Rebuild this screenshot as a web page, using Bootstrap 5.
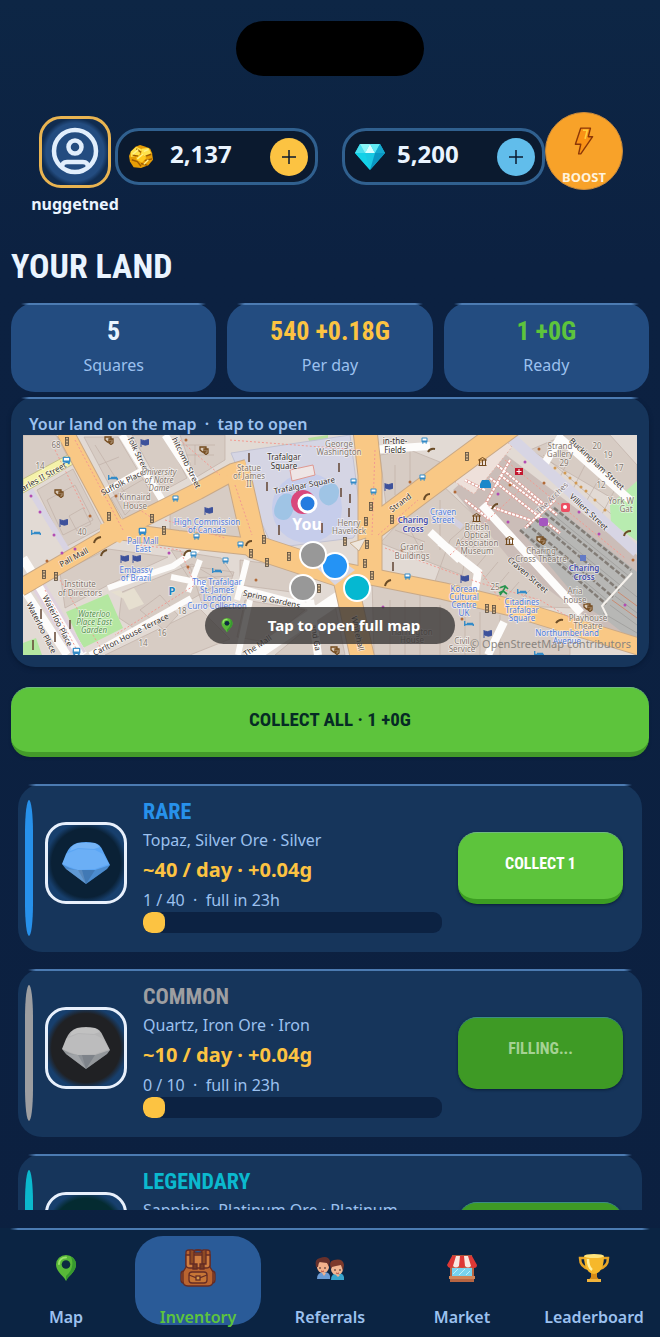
<!DOCTYPE html>
<html lang="en">
<head>
<meta charset="utf-8">
<meta name="viewport" content="width=device-width, initial-scale=1">
<title>Your Land</title>
<link href="https://cdn.jsdelivr.net/npm/bootstrap@5.3.0/dist/css/bootstrap.min.css" rel="stylesheet">
<style>
  :root { --ice:#eaf4ff; --soft:#9cc1ef; --gold:#fcc342; --green:#5dc43c; --panel:#16355b; --tile:#234c80; --edge:#4c7bb2; }
  body { font-family:"Noto Sans",sans-serif; color:var(--ice); background:linear-gradient(#0d2645,#0c2141 20%,#0c2040); }
  .app { height:100vh; overflow:hidden; }
  .display-face { font-family:"Liberation Sans Narrow","Roboto Condensed",sans-serif; font-weight:700; }
  .island { width:188px; height:55px; margin-top:21px; border-radius:28px; background:#000; }
  .topbar { margin-top:36px; padding:0 37px 0 39px; }
  .profile { width:72px; margin-top:4px; }
  .avatar { width:72px; height:72px; border:3px solid #e9b451; border-radius:22px; background:radial-gradient(circle,#234c80 62%,#102c50 72%); }
  .player { font-size:16px; line-height:24px; margin-top:4px; }
  .wallet { height:57px; margin-top:16px; border:3px solid #30608f; border-radius:24px; background:#0b1a2f; padding:0 7px 0 10px; }
  .wallet output { font-size:24px; line-height:28px; padding-bottom:5px; }
  .plus { width:38px; height:38px; border-radius:50%; color:#0b1a2f; }
  .boost { width:78px; height:78px; border-radius:50%; background:#f8a229; border:1px solid #c98a3c; color:#fff3dc; font-size:13px; line-height:16px; padding:14px 0 4px; }
  .content { padding:0 11px; }
  .page-title { font-size:34px; line-height:40px; margin:30px 0 17px; }
  .stats { gap:11px; }
  .lit { position:relative; }
  .lit::before { content:""; position:absolute; top:0; left:10px; right:10px; height:2px; background:linear-gradient(90deg,transparent,var(--edge) 8px,var(--edge) calc(100% - 8px),transparent); }
  .stat { height:89px; border-radius:24px; background:var(--tile); padding-top:12px; }
  .stat dt { font-size:16px; line-height:24px; font-weight:400; color:var(--soft); margin-top:6px; }
  .stat dd { font-size:26px; line-height:32px; margin:0; }
  .gold { color:var(--gold); } .leaf { color:var(--green); } .soft { color:var(--soft); }
  .map-card { border-radius:24px; background:var(--panel); margin-top:5px; padding:16px 12px 12px; box-shadow:0 2px 4px #081a35; }
  .map-card h2 { font-size:16px; line-height:22px; margin:0 0 0 6px; font-weight:600; }
  .map-link { position:relative; height:220px; }
  .map-link svg.chart { width:100%; height:220px; }
  .map-hint { position:absolute; left:0; right:0; bottom:11px; margin:auto; width:250px; height:37px; border-radius:19px; background:rgba(55,53,53,.78); color:#fff; font-size:15px; }
  .credit { position:absolute; right:6px; bottom:3px; font-size:11px; line-height:16px; color:#8a8580; }
  .btn-dig { border:0; border-bottom:5px solid #3c9d22; border-top:1px solid #70ba80; border-radius:19px; background:var(--green); color:#fff; box-shadow:0 1px 3px #0a1e38; }
  .btn-dig:disabled { background:#3e9a25; border-bottom-color:#3e9a25; border-top-color:#3b8d85; color:#a5d293; opacity:1; }
  .btn-all { height:70px; margin-top:20px; font-size:19px; color:#062b25; border-bottom-color:#439b2a; }
  .deposits { gap:17px; padding:27px 7px 0; }
  .deposit { height:168px; flex:none; border-radius:24px; background:var(--panel); padding:16px 19px 16px 7px; }
  .rail { width:8px; margin-right:12px; border-radius:4px/32px; background:var(--tone); }
  .gem-box { width:82px; height:82px; margin-bottom:10px; border:3px solid #e8f0fc; border-radius:21px; background:radial-gradient(circle,var(--pit) 64%,#173f6d 76%); }
  .deposit h3 { font-size:22px; line-height:24px; margin:0; color:var(--tone); }
  .ores { font-size:16px; line-height:32px; }
  .rate { font-size:20px; line-height:28px; }
  .rate, .ores, .fill-note { white-space:nowrap; }
  .fill-note { font-size:16px; line-height:24px; padding-top:4px; }
  .meter { height:21px; border-radius:9px; background:#0c2242; --bs-progress-bar-bg:#fcc342; }
  .meter .progress-bar { min-width:22px; border-radius:8px; }
  .deposit .btn-dig { width:165px; height:72px; font-size:16px; padding-bottom:10px; }
  .tone-rare { --tone:#2791eb; --pit:#0a2136; }
  .tone-common { --tone:#9d9ea1; --pit:#202124; }
  .tone-legend { --tone:#0bb9ce; --pit:#042b31; }
  .tabs { margin-top:18px; padding:8px 0 12px; background:#0b2443; }
  .tab-item { flex:1 1 0; height:89px; margin:0 3px; padding-top:12px; border-radius:28px; font-size:16px; line-height:24px; }
  .tab-item span { margin-bottom:-4px; }
  .tab-item.current { background:#2a5b98; color:var(--green); }
  /* street map */
  .st { fill:none; stroke:#fdfcfb; stroke-width:7; }
  .mn { fill:none; stroke:#f9c885; stroke-linejoin:round; }
  .mc { fill:none; stroke:#c9a987; stroke-linejoin:round; }
  .path { fill:none; stroke:#f29a91; stroke-width:1; stroke-dasharray:2 2; }
  .lot { fill:#d7ccc4; stroke:#c0b0a7; stroke-width:.7; }
  .tx { font-family:"Noto Sans",sans-serif; text-anchor:middle; paint-order:stroke; stroke:#fff; stroke-opacity:.6; stroke-width:1.5px; }
  .t8 { font-size:8px; }
</style>
</head>
<body>
<svg class="d-none" xmlns="http://www.w3.org/2000/svg">
  <symbol id="pin" viewBox="0 0 20 27"><path d="M10 26C8 21 0 17 0 9.500A10 9.500 0 0 1 20 9.500C20 17 12 21 10 26Z" fill="#58b838"/><path d="M10 26C12 21 20 17 20 9.500A10 9.500 0 0 0 15 1.500C18 9 16 16 10 21Z" fill="#37992f"/><path d="M3 9c0-4 3-6.500 7-6.500" fill="none" stroke="#9be16c" stroke-width="2" stroke-linecap="round"/><circle cx="10" cy="9.500" r="4.300" fill="#0d2941"/></symbol>
  <symbol id="gem" viewBox="0 0 48 42"><path d="M4 12Q8 3 15 1q9-2 18 0 5 1 8 8l7 14-3 4-21 15L4 27 0 22Z" fill="currentColor"/><path d="M10 4 16 1h17l5 4-6 2-16-1-8 3Z" fill="#fff" opacity=".16"/><path d="M4 12 16 7l17 1 8 4 6 10-14 5-17 1-16-6Z" fill="#fff" opacity=".1"/><path d="M0 22q8 5 16 6h17l15-5-3 4-21 15L4 27Z" fill="#123" opacity=".2"/><path d="M16 28h17l-9 14Z" fill="#123" opacity=".16"/><path d="m16 28 4 0 4 14L4 27Z" fill="#fff" opacity=".12"/></symbol>
  <symbol id="lights" viewBox="0 0 4 9"><rect x=".5" y=".5" width="3" height="8" fill="#d7b78d" stroke="#554a3d" stroke-width=".8"/><path d="M1 3h2M1 6h2" stroke="#554a3d" stroke-width="1"/></symbol>
  <symbol id="flag" viewBox="0 0 9 8"><path d="M1 0v8M1.500 1Q4 2.500 8.500.5v5Q5 7 1.500 5Z" fill="#3d519b" stroke="#3d519b"/></symbol>
  <symbol id="mask" viewBox="0 0 10 9"><path d="M1 1h6v5H3.500L1 4ZM5 3h4v4L7 8.500 5 7Z" fill="#d9c9b7" stroke="#734a1d" stroke-width="1.300"/></symbol>
  <symbol id="bus" viewBox="0 0 7 7"><rect x=".5" y=".5" width="6" height="5" rx="1" fill="#338bc8"/><path d="M1.500 1.500h4v2h-4z" fill="#fff"/><path d="M1 6h1.500M4.500 6H6" stroke="#338bc8"/></symbol>
  <symbol id="bed" viewBox="0 0 10 5"><path d="M.7 0v5M1 3.500h8.300V5M3 2.500h6" fill="none" stroke="#338bc8" stroke-width="1.300"/></symbol>
  <symbol id="museum" viewBox="0 0 9 9"><path d="M.5 3 4.500.5 8.500 3ZM1.500 3v5M4.500 3v5M7.500 3v5M.5 8.500h8" fill="none" stroke="#734a1d"/></symbol>
</svg>

<div class="app d-flex flex-column">
  <div class="island flex-shrink-0 mx-auto"></div>

  <header class="topbar d-flex align-items-start flex-shrink-0">
    <div class="profile d-flex flex-column align-items-center flex-shrink-0 me-1">
      <div class="avatar d-flex justify-content-center">
        <svg width="48" height="48" viewBox="0 0 48 48" class="mt-2" fill="none" stroke="#e1eefc" stroke-width="4.500"><circle cx="24" cy="24" r="21"/><circle cx="24" cy="20" r="6.500"/><path d="M11 41c0-5 2-6 5-6h16c3 0 5 1 5 6"/></svg>
      </div>
      <div class="player fw-bold">nuggetned</div>
    </div>
    <div class="wallet d-flex align-items-center flex-fill">
      <svg width="26" height="24" viewBox="0 0 28 26"><path d="m3 7 5-5 5-2 6 2 5 2 2 5 1 7-5 6-8 3-8-1-4-6-1-6Z" fill="#e69d06"/><path d="m3 7 6-5 6 3-3 6-9 2ZM15 4l7-1 3 6-6 4-5-3Z" fill="#ffe24c"/><path d="m9 12 6-2 5 4-5 5-6-3Z" fill="#ffca20"/><path d="m4 16 6 2 4 5M18 17l8-2M19 12l6-2M9 4l5 4M14 20l7 2M5 11l6 1" stroke="#9d5c02" stroke-width="1.500" fill="none"/><path d="m10 15 6-5M5 10l6-5M17 21l5-5M17 7l5-2" stroke="#fff28d" stroke-width="1.500"/></svg>
      <output class="fw-bold ms-3 me-auto" aria-label="Gold">2,137</output>
      <button type="button" class="plus btn p-0 border-0 d-flex align-items-center justify-content-center" style="background:#fcc342" aria-label="Add gold"><svg width="14" height="14" viewBox="0 0 14 14"><path d="M7 0v14M0 7h14" stroke="currentColor" stroke-width="1.500"/></svg></button>
    </div>
    <div class="wallet d-flex align-items-center flex-fill ms-4">
      <svg width="30" height="26" viewBox="0 0 30 26"><path d="M5 0h20l5 9-15 17L0 9Z" fill="#18c9e3"/><path d="M5 0 10 9H0Z" fill="#49dfef"/><path d="M5 0h10L10 9Z" fill="#8bf6f6"/><path d="m15 0 5 9H10Z" fill="#d6ffff"/><path d="M15 0h10l-5 9Z" fill="#62eaf4"/><path d="m25 0 5 9H20Z" fill="#14a8cf"/><path d="m10 9 5 17L0 9Z" fill="#13d2e8"/><path d="M20 9h10L15 26Z" fill="#0a97c3"/></svg>
      <output class="fw-bold ms-2 ps-1 me-auto" aria-label="Diamonds">5,200</output>
      <button type="button" class="plus btn p-0 border-0 d-flex align-items-center justify-content-center" style="background:#61bdeb" aria-label="Add diamonds"><svg width="14" height="14" viewBox="0 0 14 14"><path d="M7 0v14M0 7h14" stroke="currentColor" stroke-width="1.500"/></svg></button>
    </div>
    <button type="button" class="boost btn d-flex flex-column align-items-center justify-content-between flex-shrink-0 fw-bold">
      <svg width="20" height="28" viewBox="0 0 18 26"><path d="M6 1h9l-2 8h4L6 25H4l2-9H1Z" fill="#fa9316" stroke="#8b3708" stroke-width="1.300" stroke-linejoin="round"/><path d="M8 3h4l-2 8" fill="none" stroke="#ffcf3c" stroke-width="1.500"/></svg>
      BOOST
    </button>
  </header>

  <main class="content flex-fill overflow-hidden d-flex flex-column">
    <h1 class="page-title display-face flex-shrink-0">YOUR LAND</h1>
    <dl class="stats d-flex text-center mb-0 flex-shrink-0">
      <div class="stat lit d-flex flex-column-reverse justify-content-end flex-fill w-100"><dt>Squares</dt><dd class="display-face">5</dd></div>
      <div class="stat lit d-flex flex-column-reverse justify-content-end flex-fill w-100"><dt>Per day</dt><dd class="display-face gold">540 +0.18G</dd></div>
      <div class="stat lit d-flex flex-column-reverse justify-content-end flex-fill w-100"><dt>Ready</dt><dd class="display-face leaf">1 +0G</dd></div>
    </dl>

    <section class="map-card lit flex-shrink-0">
      <h2 class="soft">Your land on the map &nbsp;·&nbsp; tap to open</h2>
      <a href="#map" class="map-link d-block text-decoration-none overflow-hidden">
        <svg class="chart d-block" viewBox="23 435 614 220" preserveAspectRatio="xMidYMid slice">
          <rect x="-100" y="400" width="900" height="300" fill="#e2dad4"/>
          <!-- building blocks -->
          <g class="lot">
            <path d="M23 435h33l12 22-45 23ZM37 490l36-21 30 58-38 20ZM84 437h34l32 54-25 24ZM111 498l38-22 15 26-39 20ZM132 435h33l22 43-24 13ZM180 435h45v25l-30 18ZM170 508l55-25 12 8 13 52-80-12ZM60 573l48-24 60 8-58 27-45 24ZM122 592l70-28 30 18-85 48-18-12ZM171 550l50 8 12 18-44 2ZM105 655l95-46 30 30-40 16ZM190 566l44 6-12 38-20-6ZM240 560l70 9-4 25-66-9ZM245 600l60 10-40 32-28-5ZM275 655l60-50 10 50ZM380 455l30-5 30 12-54 44ZM425 495l15-12 34 32-12 60-82-32ZM372 580l70 14 80 20 48 14v27H374ZM450 540l34-30 75 60 18 38-68-2-75-22ZM530 450l35-15h45l27 30v48Z"/>
            <path d="M47 500l28-15 18 35-30 15ZM69 516l14-8 8 16-14 7ZM140 610l20-15 18 20-14 15ZM395 465v30M410 450v34M440 500v50M180 445h35M186 455h28M195 445v20M95 445l30 48M99 465l20-8M405 520l20 38M395 530l30 12M390 600v55M405 600v55M420 595v60M440 605v50M465 605v50M480 612v43M500 615v40"/>
            <path d="M465 535l-14 18M475 545l-15 18M486 555l-15 18M498 562l-15 18M509 572l-15 18M519 582l-14 16M530 590l-14 14M543 455l75 65M560 445l-18 26M575 447l-18 36M590 455l-18 36M605 468l-18 32M620 480l-18 34" fill="none"/>
          </g>
          <path d="M120 590l13 14-22-12ZM121 594l13-6 10 16-15 6Z" fill="#e6dfd0"/>
          <path d="M66 612l42-18 15 34-40 20ZM23 643l13-5 6 17H23Z" fill="#b4e7a1"/>
          <path d="M610 505l27-24v60l-26-18Z" fill="#b8ecb0"/>
          <path d="M246 453l40-9 2 6-38 9ZM308 438l20-3v4l-18 4Z" fill="#b8df9c"/>
          <!-- trafalgar square -->
          <path d="M231 453l119-18 12 90-9 13-80 10-28-62Z" fill="#d5d5e4" stroke="#c2c2d2"/>
          <circle cx="307" cy="508" r="35" fill="#c6cdeb"/>
          <path d="M275 506q5-15 15-12 6 5 3 17-4 12-14 8-7-3-4-13ZM320 489q7-8 15-5 7 5 2 16-7 9-14 3-6-5-3-14Z" fill="#9fc4e5"/>
          <path d="M290 470l23-5 2 10-23 6Z" fill="#eee5e5" stroke="#df9991"/>
          <!-- charing cross station -->
          <path d="M500 450l137 105v100L515 565l-62-75 48-44Z" fill="#cbbdb8"/>
          <path d="M455 482l46-47 11 12-38 47Z" fill="#eee0da" stroke="#e1b3a9" stroke-dasharray="2 2"/>
          <path d="M520 530l34-24 83 66v72l-28-22-29-20Z" fill="#b7b7b5"/>
          <g fill="none" stroke="#827c76" stroke-width="2.500" stroke-dasharray="5 2"><path d="M520 530l86 74M527 524l86 73M535 519l84 71M545 513l80 65M554 508l77 62"/></g>
          <g fill="none" stroke="#a3a2a0"><path d="M532 538l75 62M540 520l80 65M550 512l80 65M603 613l34 20M610 605l27 20M615 596l22 17M622 585l15 12"/></g>
          <path d="M612 600l25 18M618 592l19 14" fill="none" stroke="#c98b72"/>
          <path d="M485 490l-20-10M490 478l70 55M510 460l-25 45 45 15M500 475l40 30M555 500l-30 28M497 465l60 50M465 500l25 20" fill="none" stroke="#dc9a92" stroke-width="3"/>
          <path d="M485 490l-20-10M490 478l70 55M510 460l-25 45 45 15M500 475l40 30M555 500l-30 28M497 465l60 50M465 500l25 20" fill="none" stroke="#fff" stroke-width="2" stroke-dasharray="3 1"/>
          <path d="M632 573l-30 33 5 10" fill="none" stroke="#f6f2ed" stroke-width="2"/>
          <!-- lesser streets -->
          <g class="st">
            <path d="M23 558l60 97" stroke-width="9"/><path d="M38 585l42 70" stroke="#e0d2de" stroke-width="14"/><path d="M23 588l44 67M38 585l42 70" stroke-width="8"/>
            <path d="M30 490l40 65" stroke="#d8d3e3" stroke-width="6"/><path d="M103 493l42-24M122 435l42 68M165 435l36 55"/>
            <path d="M108 588l65-22 25-17M171 577l35 7M90 655l101-57M200 560l-12 32M240 588l75 20M247 560l-10 40M250 600l-12 55" stroke-width="6"/>
            <path d="M340 597l-92 62" stroke-width="13"/><path d="M310 600l8 55" stroke-width="8"/>
            <path d="M370 450l60-4M430 532l30 28M440 542l38 30-5 30M482 505l99 108M504 622l-16 33" stroke-width="8"/>
            <path d="M541 470l19-32 70 62" stroke-width="8"/><path d="M508 435l129 117" stroke="#d7d5e4" stroke-width="11"/><path d="M440 510l22 17" stroke="#d3d0df" stroke-width="6"/>
          </g>
          <path d="M23 479l52-28v12l-52 30Z" fill="#f5f2a9" stroke="#c5bf8b"/>
          <!-- main roads -->
          <g class="mc"><path d="M65 432l53 99M20 588l98-57 80-40 35-19 14-4M118 531l60 8 75 8 70 20 120 24 70 17 127 39" stroke-width="18"/><path d="M238 472l17 75 85 28M365 430l5 45 0 100M343 570l20 90M370 530l60-45 84-62" stroke-width="25"/></g>
          <g class="mn"><path d="M65 432l53 99M20 588l98-57 80-40 35-19 14-4M118 531l60 8 75 8 70 20 120 24 70 17 127 39" stroke-width="16"/><path d="M238 472l17 75 85 28M365 430l5 45 0 100M343 570l20 90M370 530l60-45 84-62" stroke-width="23"/></g>
          <path d="M350 543l16-5-7 13Z" fill="#eee6dc" stroke="#c9ad8d"/><path d="M317 568l22-9 16 11-20 15Z" fill="#d7d5e2"/>
          <path d="M100 525l18-8 18 10-16 16-20-8Z" fill="#f9c885"/>
          <g class="path"><path d="M75 440l48 90M55 450l30 60M140 545l40 5 15 35-80 50M45 590l32 60M165 520l60 18M235 485l17 50M375 450l-3 85M385 548l95 35 60 17M450 555l70-65M505 460l120 98M500 600l-20-30M540 600l50 30M180 440l40 35M230 440l130 10M378 535l40-35M60 580l42 70M125 500l30 20"/></g>
          <g fill="#d29a52"><circle cx="555" cy="468" r="1.500"/><circle cx="565" cy="473" r="1.500"/><circle cx="570" cy="478" r="1.500"/><circle cx="576" cy="483" r="1.500"/><circle cx="581" cy="487" r="1.500"/><circle cx="586" cy="491" r="1.500"/><circle cx="595" cy="500" r="1.500"/><circle cx="605" cy="510" r="1.500"/></g>
          <!-- points of interest -->
          <g fill="#b34cb3"><circle cx="31" cy="496" r="1.500"/><circle cx="40" cy="512" r="1.500"/><circle cx="54" cy="535" r="1.500"/><circle cx="62" cy="553" r="1.500"/><circle cx="75" cy="549" r="1.500"/><circle cx="169" cy="553" r="1.500"/><circle cx="498" cy="494" r="1.500"/><circle cx="525" cy="462" r="1.500"/><circle cx="579" cy="512" r="1.500"/><circle cx="599" cy="534" r="1.500"/><circle cx="625" cy="605" r="1.500"/><circle cx="508" cy="522" r="1.500"/><circle cx="383" cy="607" r="1.500"/></g>
          <g fill="#b26a37"><circle cx="116" cy="496" r="1.500"/><circle cx="90" cy="516" r="1.500"/><circle cx="188" cy="567" r="1.500"/><circle cx="47" cy="561" r="1.500"/><circle cx="186" cy="440" r="1.500"/><circle cx="256" cy="580" r="1.500"/><circle cx="410" cy="482" r="1.500"/><circle cx="455" cy="492" r="1.500"/><circle cx="510" cy="485" r="1.500"/><circle cx="544" cy="483" r="1.500"/><circle cx="539" cy="449" r="1.500"/><circle cx="402" cy="550" r="1.500"/><circle cx="462" cy="619" r="1.500"/><circle cx="633" cy="560" r="1.500"/></g>
          <g>
            <use href="#lights" x="65" y="437" width="4" height="9"/><use href="#lights" x="107" y="512" width="4" height="9"/><use href="#lights" x="150" y="514" width="4" height="9"/><use href="#lights" x="42" y="570" width="4" height="9"/><use href="#lights" x="54" y="572" width="4" height="9"/><use href="#lights" x="162" y="526" width="4" height="9"/><use href="#lights" x="262" y="535" width="4" height="9"/><use href="#lights" x="249" y="549" width="4" height="9"/><use href="#lights" x="265" y="558" width="4" height="9"/><use href="#lights" x="287" y="552" width="4" height="9"/><use href="#lights" x="369" y="502" width="4" height="9"/><use href="#lights" x="364" y="517" width="4" height="9"/><use href="#lights" x="365" y="540" width="4" height="9"/><use href="#lights" x="343" y="537" width="4" height="9"/><use href="#lights" x="317" y="584" width="4" height="9"/><use href="#lights" x="363" y="559" width="4" height="9"/><use href="#lights" x="370" y="571" width="4" height="9"/><use href="#lights" x="390" y="515" width="4" height="9"/><use href="#lights" x="465" y="452" width="4" height="9"/><use href="#lights" x="485" y="604" width="4" height="9"/><use href="#lights" x="492" y="605" width="4" height="9"/>
            <use href="#flag" x="140" y="439" width="9" height="8"/><use href="#flag" x="59" y="519" width="9" height="8"/><use href="#flag" x="120" y="555" width="9" height="8"/><use href="#flag" x="132" y="555" width="9" height="8"/><use href="#flag" x="204" y="507" width="9" height="8"/><use href="#flag" x="384" y="483" width="9" height="8"/><use href="#flag" x="460" y="575" width="9" height="8"/><use href="#flag" x="483" y="630" width="9" height="8"/>
            <use href="#mask" x="104" y="436" width="10" height="9"/><use href="#mask" x="54" y="489" width="10" height="9"/><use href="#mask" x="199" y="446" width="10" height="9"/><use href="#mask" x="536" y="536" width="10" height="9"/><use href="#mask" x="583" y="603" width="10" height="9"/><use href="#mask" x="330" y="646" width="10" height="9"/>
            <use href="#bus" x="172" y="495" width="7" height="7"/><use href="#bus" x="193" y="533" width="7" height="7"/><use href="#bus" x="190" y="551" width="7" height="7"/><use href="#bus" x="237" y="541" width="7" height="7"/><use href="#bus" x="350" y="478" width="7" height="7"/><use href="#bus" x="370" y="488" width="7" height="7"/><use href="#bus" x="419" y="474" width="7" height="7"/><use href="#bus" x="421" y="437" width="7" height="7"/><use href="#bus" x="404" y="573" width="7" height="7"/><use href="#bus" x="62" y="456" width="9" height="9"/><use href="#bus" x="138" y="527" width="9" height="9"/><use href="#bus" x="72" y="647" width="9" height="9"/><use href="#bus" x="222" y="557" width="7" height="7"/>
            <use href="#bed" x="31" y="530" width="10" height="5"/><use href="#bed" x="108" y="475" width="10" height="5"/><use href="#bed" x="212" y="568" width="10" height="5"/><use href="#bed" x="517" y="589" width="10" height="5"/><use href="#bed" x="464" y="621" width="10" height="5"/><use href="#bed" x="534" y="651" width="10" height="5"/>
            <use href="#museum" x="478" y="457" width="9" height="9"/><use href="#museum" x="472" y="513" width="9" height="9"/><use href="#museum" x="505" y="536" width="9" height="9"/>
          </g>
          <path d="M94 543q1-5 7-6M101 556q1-5 6-6M184 556q1-6 7-5M246 546q1-5 6-5M385 586q1-5 6-6M424 500q1-6 6-6M428 452q2-4 7-3M492 509q2-5 6-5M624 536q1-5 7-5M556 623q3-4 7-3" fill="none" stroke="#6b4c27" stroke-width="2"/>
          <path d="M41 609v10M70 620v9M55 632v10M33 640v10M279 525v10M322 523v10M350 494v9M249 453v9M339 463v9M267 482v9M341 488v9M349 508v9M393 562v9" stroke="#614432" stroke-width="1.500"/>
          <path d="M515 468h8v7h-8Z" fill="#c3172e"/><path d="M519 469v5M516.500 471.500h5" stroke="#fff"/>
          <rect x="561" y="503" width="9" height="9" rx="2" fill="#ed4d61"/><circle cx="565" cy="507" r="2" fill="#fff"/><rect x="539" y="518" width="9" height="8" rx="2" fill="#a556bf"/><rect x="580" y="555" width="6" height="6" fill="#637ac5"/><path d="M480 484l2-4h7l2 4v4h-11Z" fill="#1b87ca"/>
          <path d="M506 586l-3 5-4 2M503 591l4 3M499 588l6-2 3 3M500 595l3-4" fill="none" stroke="#26934c" stroke-width="1.600"/>
          <text class="tx" x="172" y="595" font-size="11" font-weight="700" fill="#1c83c2">P</text>
          <!-- street names -->
          <g class="tx t8" fill="#39322d">
            <text transform="translate(45 479) rotate(-29)">arles II Street</text><text transform="translate(75 560) rotate(-28)">Pall Mall</text><text transform="translate(124 485) rotate(-27)">Suffolk Place</text><text transform="translate(136 456) rotate(64)">folk Street</text><text transform="translate(184 464) rotate(64)">hitcomb Street</text><text transform="translate(55 622) rotate(63)">Waterloo Place</text><text transform="translate(39 629) rotate(63)">Waterloo Place</text><text transform="translate(132 637) rotate(-27)">Carlton House Terrace</text><text transform="translate(271 602) rotate(13)">Spring Gardens</text><text transform="translate(259 648) rotate(-34)">The Mall</text><text transform="translate(402 505) rotate(-37)">Strand</text><text transform="translate(526 577) rotate(41)">Craven Street</text><text transform="translate(587 514) rotate(43)">Villiers Street</text><text transform="translate(595 466) rotate(43)">Buckingham Street</text><text transform="translate(305 488) rotate(-11)">Trafalgar Square</text><text transform="translate(355 634) rotate(78)">Whitehall</text><text transform="translate(313 638) rotate(80)">and Ga</text><text transform="translate(554 500) rotate(-45)" fill="#887c7c">The Arches</text>
            <text x="284" y="460">Trafalgar</text><text x="284" y="469">Square</text><text x="395" y="444">in-the-</text><text x="395" y="453">Fields</text>
          </g>
          <!-- place names -->
          <g class="tx t8" fill="#85786e">
            <text x="159" y="475" font-style="italic">University</text><text x="159" y="483" font-style="italic">of Notre</text><text x="159" y="491" font-style="italic">Dame</text><text x="135" y="500">Kinnaird</text><text x="135" y="509">House</text><text x="80" y="587">Institute</text><text x="80" y="596">of Directors</text><text x="249" y="471">Statue</text><text x="249" y="479">of James</text><text x="249" y="487">II</text><text x="339" y="447">George</text><text x="339" y="455">Washington</text><text x="349" y="526">Henry</text><text x="349" y="534">Havelock</text><text x="412" y="550">Grand</text><text x="412" y="559">Buildings</text><text x="560" y="449">Strand</text><text x="560" y="457">Gallery</text><text x="477" y="530">British</text><text x="477" y="538">Optical</text><text x="477" y="546">Association</text><text x="477" y="554">Museum</text><text x="541" y="554">Charing</text><text x="541" y="562">Cross Theatre</text><text x="575" y="594">Aria</text><text x="575" y="603">house</text><text x="588" y="621">Playhouse</text><text x="588" y="629">Theatre</text><text x="621" y="504">York W</text><text x="626" y="512">Gat</text><text x="462" y="644">Civil</text><text x="462" y="652">Service</text><text x="412" y="635">Harrington</text><text x="412" y="643">House</text><text x="94" y="617" font-style="italic" fill="#5b9352">Waterloo</text><text x="94" y="625" font-style="italic" fill="#5b9352">Place East</text><text x="94" y="633" font-style="italic" fill="#5b9352">Garden</text>
            <text x="40" y="469">14</text><text x="82" y="535">40</text><text x="56" y="448">68</text><text x="182" y="614">18</text><text x="143" y="646">14</text><text x="162" y="636">16</text><text x="495" y="590">25</text><text x="564" y="466">29</text><text x="597" y="449">20</text><text x="608" y="458">19</text><text x="619" y="471">17</text><text x="601" y="488">12</text>
          </g>
          <g class="tx t8" fill="#507bdb">
            <text x="143" y="544">Pall Mall</text><text x="143" y="552">East</text><text x="136" y="573">Embassy</text><text x="136" y="581">of Brazil</text><text x="207" y="525">High Commission</text><text x="207" y="533">of Canada</text><text x="217" y="585">The Trafalgar</text><text x="217" y="593">St. James</text><text x="217" y="601">London</text><text x="217" y="609">Curio Collection</text><text x="413" y="523" font-weight="600" fill="#484fae">Charing</text><text x="413" y="532" font-weight="600" fill="#484fae">Cross</text><text x="584" y="571" font-weight="600" fill="#484fae">Charing</text><text x="584" y="580" font-weight="600" fill="#484fae">Cross</text><text x="443" y="515">Craven</text><text x="443" y="523">Street</text><text x="464" y="592">Korean</text><text x="464" y="600">Cultural</text><text x="464" y="608">Centre</text><text x="464" y="616">UK</text><text x="522" y="605">Citadines</text><text x="522" y="613">Trafalgar</text><text x="522" y="621">Square</text><text x="567" y="636">Northumberland</text><text x="567" y="644">Avenue</text>
          </g>
          <!-- player and plots -->
          <circle cx="303" cy="502" r="12" fill="#d9487c"/>
          <circle cx="307.500" cy="503.500" r="8.500" fill="#257ce0" stroke="#fff" stroke-width="3"/>
          <text x="307" y="530" text-anchor="middle" font-size="16" font-weight="700" fill="#fff">You</text>
          <g stroke="#fff" stroke-width="2"><circle cx="335" cy="566" r="13" fill="#2493f5"/><circle cx="313" cy="555" r="13" fill="#989898"/><circle cx="303" cy="588" r="13" fill="#989898"/><circle cx="357" cy="588" r="13" fill="#05b8d1"/></g>
        </svg>
        <span class="credit">© OpenStreetMap contributors</span>
        <span class="map-hint d-flex align-items-center fw-bold"><svg class="ms-3" width="12" height="15"><use href="#pin"/></svg><span class="flex-fill text-center">Tap to open full map</span></span>
      </a>
    </section>

    <button type="button" class="btn-dig btn-all btn display-face w-100 flex-shrink-0">COLLECT ALL · 1 +0G</button>

    <div class="deposits d-flex flex-column">
      <article class="deposit lit tone-rare d-flex align-items-center">
        <div class="rail align-self-stretch flex-shrink-0"></div>
        <div class="gem-box d-flex align-items-center justify-content-center flex-shrink-0" style="color:#5ba6f5"><svg width="48" height="42"><use href="#gem"/></svg></div>
        <div class="flex-fill mx-3 align-self-start">
          <h3 class="display-face">RARE</h3>
          <div class="ores soft">Topaz, Silver Ore · Silver</div>
          <div class="rate gold fw-bold">~40 / day · +0.04g</div>
          <div class="fill-note soft">1 / 40 &nbsp;·&nbsp; full in 23h</div>
          <div class="meter progress" role="progressbar" aria-label="Rare storage" aria-valuenow="1" aria-valuemin="0" aria-valuemax="40"><div class="progress-bar" style="width:2.5%"></div></div>
        </div>
        <button type="button" class="btn-dig btn display-face flex-shrink-0">COLLECT 1</button>
      </article>
      <article class="deposit lit tone-common d-flex align-items-center">
        <div class="rail align-self-stretch flex-shrink-0"></div>
        <div class="gem-box d-flex align-items-center justify-content-center flex-shrink-0" style="color:#b5b5b6"><svg width="48" height="42"><use href="#gem"/></svg></div>
        <div class="flex-fill mx-3 align-self-start">
          <h3 class="display-face">COMMON</h3>
          <div class="ores soft">Quartz, Iron Ore · Iron</div>
          <div class="rate gold fw-bold">~10 / day · +0.04g</div>
          <div class="fill-note soft">0 / 10 &nbsp;·&nbsp; full in 23h</div>
          <div class="meter progress" role="progressbar" aria-label="Common storage" aria-valuenow="0" aria-valuemin="0" aria-valuemax="10"><div class="progress-bar" style="width:0%"></div></div>
        </div>
        <button type="button" class="btn-dig btn display-face flex-shrink-0" disabled>FILLING...</button>
      </article>
      <article class="deposit lit tone-legend d-flex align-items-center">
        <div class="rail align-self-stretch flex-shrink-0"></div>
        <div class="gem-box flex-shrink-0"></div>
        <div class="flex-fill mx-3 align-self-start">
          <h3 class="display-face">LEGENDARY</h3>
          <div class="ores soft">Sapphire, Platinum Ore · Platinum</div>
        </div>
        <button type="button" class="btn-dig btn flex-shrink-0" disabled aria-label="Filling"></button>
      </article>
    </div>
  </main>

  <nav class="tabs lit d-flex flex-shrink-0" aria-label="Main">
    <a href="#map" class="tab-item soft fw-semibold text-decoration-none d-flex flex-column align-items-center justify-content-between"><svg width="40" height="40" viewBox="0 0 40 40"><use href="#pin" x="10" y="7" width="20" height="27"/></svg><span>Map</span></a>
    <a href="#inventory" class="tab-item current fw-semibold text-decoration-none d-flex flex-column align-items-center justify-content-between" aria-current="page">
      <svg width="40" height="40" viewBox="0 0 40 40" stroke="#652c25" stroke-width="1.300"><path d="M15 5q0-3 5-3t5 3" fill="none" stroke-width="2"/><rect x="3" y="23" width="8" height="12" rx="3" fill="#a95724"/><rect x="29" y="23" width="8" height="12" rx="3" fill="#a95724"/><path d="M8 4q0-2 3-2h4l2 3h6l2-3h4q3 0 3 2v15l3 5v9q0 5-5 5H10q-5 0-5-5v-9l3-5Z" fill="#b96430"/><path d="M8 7h24v10q0 3-4 3H12q-4 0-4-3Z" fill="#cf7d40"/><path d="M12 2v14h4V4M28 2v14h-4V4" fill="#8e4a24"/><path d="M15 16h4v5h-4ZM22 16h4v5h-4Z" fill="#793b21"/><rect x="11" y="24" width="18" height="11" rx="3" fill="#c77636"/><path d="M11 27l8 3h2l8-3" fill="none"/><rect x="18" y="28" width="4" height="4" fill="#d6984b"/></svg><span>Inventory</span></a>
    <a href="#referrals" class="tab-item soft fw-semibold text-decoration-none d-flex flex-column align-items-center justify-content-between">
      <svg width="40" height="40" viewBox="0 0 40 40"><path d="M7 31q0-7 7-7t6 7Z" fill="#6b9bd4"/><path d="M21 32q0-7 7-7t6 7Z" fill="#38a4cc"/><circle cx="13" cy="19" r="6" fill="#f3b18c"/><circle cx="27" cy="21" r="6" fill="#f1b693"/><path d="M6 19q-2-8 4-9 8-3 10 3l-1 6-2-4-8-1-1 5Z" fill="#67302b"/><path d="M21 21q-3-8 3-9 9-2 10 5l-1 6-2-6-5 1-4 1Z" fill="#7c392b"/><path d="M10 19v2M15 19v2M25 21v2M30 21v2" stroke="#402425"/><path d="M11 23q2 1 3 0M26 25q2 1 3 0" fill="none" stroke="#b4483d"/><path d="M12 25l2 3 2-3M26 27l2 2 2-2" fill="#f3b18c"/></svg><span>Referrals</span></a>
    <a href="#market" class="tab-item soft fw-semibold text-decoration-none d-flex flex-column align-items-center justify-content-between">
      <svg width="40" height="40" viewBox="0 0 40 40"><path d="M8 17h24v17H8Z" fill="#b76542"/><path d="M10 20h20v8H10Z" fill="#78d4ef"/><path d="M11 26l5-5M17 27l6-6M24 27l4-4" stroke="#c2f1fb"/><path d="M7 28h26v3H7Z" fill="#d08659"/><path d="M10 7h20v2H10Z" fill="#a5563d"/><path d="M10 8h20l5 9q0 3-3 3t-3-2q-3 4-6 0-3 4-6 0-3 4-6 0-1 2-3 2t-3-3Z" fill="#dd3835"/><path d="M14 8h4l-1 10q-3 3-6 0ZM22 8h4l3 10q-3 3-6 0Z" fill="#f9e8e0"/></svg><span>Market</span></a>
    <a href="#leaderboard" class="tab-item soft fw-semibold text-decoration-none d-flex flex-column align-items-center justify-content-between">
      <svg width="40" height="40" viewBox="0 0 40 40"><path d="M12 10H6q0 9 9 11M28 10h6q0 9-9 11" fill="none" stroke="#e7a526" stroke-width="2.500"/><path d="M17 23h6v6l3 4H14l3-4Z" fill="#d58c19"/><path d="M10 8h20q0 17-10 18Q10 25 10 8Z" fill="#f6b82b"/><ellipse cx="20" cy="8" rx="10" ry="2" fill="#ffe47c"/><path d="M14 11q0 8 4 11" stroke="#fff0a0" stroke-width="2.500" fill="none"/><path d="M13 31h14v3H13Z" fill="#f0b33b"/></svg><span>Leaderboard</span></a>
  </nav>
</div>
<script src="https://cdn.jsdelivr.net/npm/bootstrap@5.3.0/dist/js/bootstrap.bundle.min.js"></script>
</body>
</html>
